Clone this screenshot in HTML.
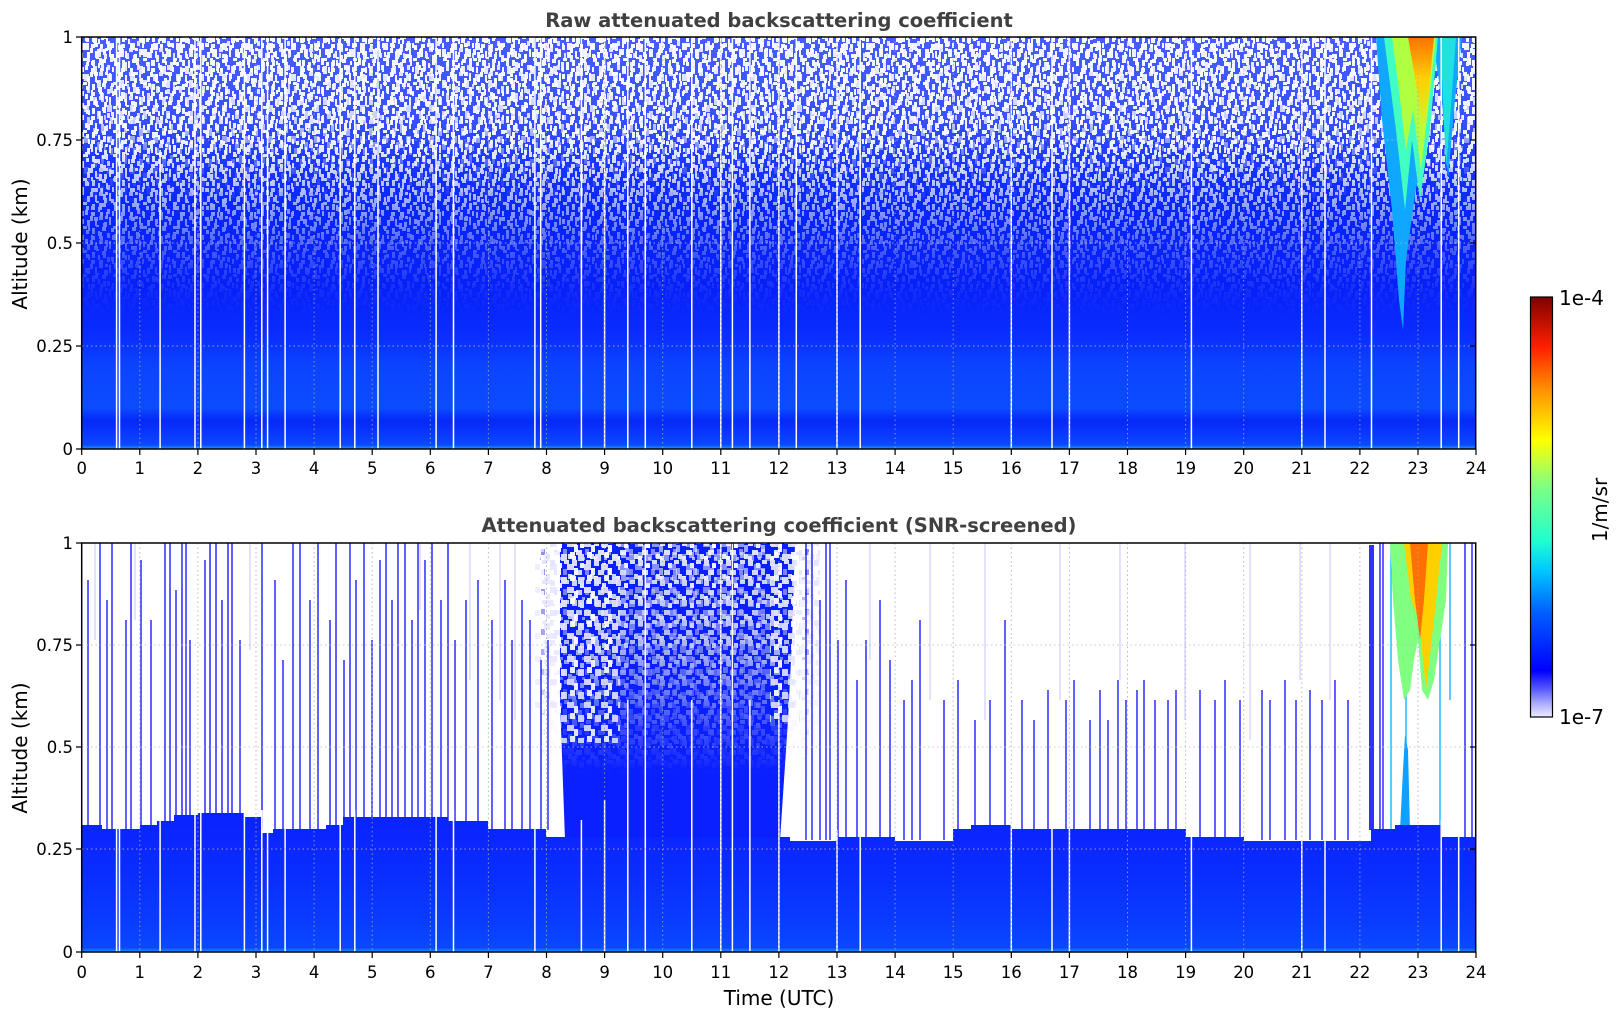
<!DOCTYPE html>
<html><head><meta charset="utf-8">
<style>
html,body{margin:0;padding:0;background:#fff;}
svg{display:block;}
text{font-family:"DejaVu Sans","Liberation Sans",sans-serif;fill:#000;}
</style></head>
<body>
<svg width="1621" height="1020" viewBox="0 0 1621 1020" xmlns="http://www.w3.org/2000/svg">
<defs>
  <linearGradient id="topBase" x1="0" y1="0" x2="0" y2="1">
    <stop offset="0" stop-color="#1030ff"/>
    <stop offset="0.35" stop-color="#0a28ff"/>
    <stop offset="0.6" stop-color="#0620f8"/>
    <stop offset="0.72" stop-color="#0a2cff"/>
    <stop offset="0.8" stop-color="#0c44ff"/>
    <stop offset="0.9" stop-color="#0c4cff"/>
    <stop offset="0.93" stop-color="#0628f8"/>
    <stop offset="0.96" stop-color="#0a36ff"/>
    <stop offset="0.99" stop-color="#0c48ff"/>
    <stop offset="1" stop-color="#10a0ff"/>
  </linearGradient>
  <linearGradient id="topMaskG" x1="0" y1="0" x2="0" y2="1">
    <stop offset="0" stop-color="#fff" stop-opacity="1"/>
    <stop offset="0.25" stop-color="#fff" stop-opacity="0.95"/>
    <stop offset="0.4" stop-color="#fff" stop-opacity="0.6"/>
    <stop offset="0.52" stop-color="#fff" stop-opacity="0.25"/>
    <stop offset="0.62" stop-color="#fff" stop-opacity="0.05"/>
    <stop offset="0.68" stop-color="#fff" stop-opacity="0"/>
  </linearGradient>
  <linearGradient id="topMaskG2" x1="0" y1="0" x2="0" y2="1">
    <stop offset="0" stop-color="#fff" stop-opacity="1"/>
    <stop offset="0.2" stop-color="#fff" stop-opacity="0.8"/>
    <stop offset="0.33" stop-color="#fff" stop-opacity="0.2"/>
    <stop offset="0.42" stop-color="#fff" stop-opacity="0"/>
  </linearGradient>
  <mask id="topMask" maskUnits="userSpaceOnUse" x="82" y="37" width="1394" height="412">
    <rect x="82" y="37" width="1394" height="412" fill="url(#topMaskG)"/>
  </mask>
  <mask id="topMask2" maskUnits="userSpaceOnUse" x="82" y="37" width="1394" height="412">
    <rect x="82" y="37" width="1394" height="412" fill="url(#topMaskG2)"/>
  </mask>
  <pattern id="sp1" width="30" height="24" patternUnits="userSpaceOnUse">
    <rect x="0" y="0" width="3" height="5" fill="#fff"/>
    <rect x="5" y="3" width="2" height="7" fill="#fff"/>
    <rect x="9" y="0" width="4" height="4" fill="#e6e6ff"/>
    <rect x="14" y="6" width="3" height="5" fill="#fff"/>
    <rect x="19" y="1" width="2" height="8" fill="#fff"/>
    <rect x="23" y="10" width="4" height="3" fill="#fff"/>
    <rect x="27" y="4" width="3" height="6" fill="#fff"/>
    <rect x="2" y="12" width="3" height="6" fill="#fff"/>
    <rect x="8" y="15" width="2" height="5" fill="#fff"/>
    <rect x="12" y="11" width="4" height="4" fill="#fff"/>
    <rect x="17" y="17" width="3" height="5" fill="#e6e6ff"/>
    <rect x="22" y="19" width="2" height="5" fill="#fff"/>
    <rect x="26" y="14" width="3" height="4" fill="#fff"/>
    <rect x="1" y="20" width="4" height="4" fill="#fff"/>
    <rect x="10" y="20" width="3" height="4" fill="#fff"/>
    <rect x="15" y="0" width="3" height="3" fill="#fff"/>
    <rect x="6" y="9" width="3" height="2" fill="#fff"/>
  </pattern>
  <pattern id="sp2" width="37" height="29" patternUnits="userSpaceOnUse">
    <rect x="3" y="2" width="2" height="6" fill="#fff"/>
    <rect x="11" y="7" width="3" height="5" fill="#fff"/>
    <rect x="17" y="3" width="2" height="4" fill="#fff"/>
    <rect x="25" y="0" width="3" height="7" fill="#fff"/>
    <rect x="32" y="9" width="2" height="6" fill="#fff"/>
    <rect x="7" y="16" width="3" height="5" fill="#fff"/>
    <rect x="20" y="14" width="4" height="4" fill="#fff"/>
    <rect x="29" y="20" width="3" height="6" fill="#fff"/>
    <rect x="14" y="23" width="2" height="5" fill="#fff"/>
    <rect x="0" y="25" width="3" height="4" fill="#fff"/>
  </pattern>
  <pattern id="sp3" width="23" height="31" patternUnits="userSpaceOnUse">
    <rect x="1" y="4" width="4" height="8" fill="#fff"/>
    <rect x="9" y="0" width="3" height="9" fill="#fff"/>
    <rect x="15" y="12" width="5" height="7" fill="#fff"/>
    <rect x="5" y="18" width="4" height="8" fill="#fff"/>
    <rect x="18" y="24" width="3" height="7" fill="#fff"/>
    <rect x="12" y="22" width="2" height="5" fill="#eaeaff"/>
  </pattern>
  <pattern id="lav" width="22" height="20" patternUnits="userSpaceOnUse">
    <rect x="0" y="0" width="5" height="6" fill="#e4e4ff"/>
    <rect x="8" y="3" width="4" height="5" fill="#fff"/>
    <rect x="14" y="0" width="5" height="4" fill="#e4e4ff"/>
    <rect x="4" y="10" width="6" height="5" fill="#e4e4ff"/>
    <rect x="13" y="9" width="4" height="6" fill="#8a8aff"/>
    <rect x="18" y="14" width="4" height="5" fill="#e4e4ff"/>
    <rect x="0" y="16" width="4" height="4" fill="#fff"/>
    <rect x="10" y="17" width="3" height="3" fill="#b0b0ff"/>
  </pattern>
  <pattern id="lav2" width="17" height="23" patternUnits="userSpaceOnUse">
    <rect x="0" y="2" width="6" height="7" fill="#e4e4ff"/>
    <rect x="9" y="0" width="5" height="6" fill="#fff"/>
    <rect x="6" y="12" width="7" height="6" fill="#e4e4ff"/>
    <rect x="13" y="16" width="4" height="7" fill="#fff"/>
  </pattern>
  <linearGradient id="blobMaskG" x1="0" y1="0" x2="0" y2="1">
    <stop offset="0" stop-color="#fff" stop-opacity="1"/>
    <stop offset="0.35" stop-color="#fff" stop-opacity="0.75"/>
    <stop offset="0.6" stop-color="#fff" stop-opacity="0.3"/>
    <stop offset="0.8" stop-color="#fff" stop-opacity="0"/>
  </linearGradient>
  <mask id="blobMask" maskUnits="userSpaceOnUse" x="540" y="543" width="280" height="290">
    <rect x="540" y="543" width="280" height="290" fill="url(#blobMaskG)"/>
  </mask>
  <linearGradient id="botBase" x1="0" y1="0" x2="0" y2="1">
    <stop offset="0" stop-color="#0a22ff"/>
    <stop offset="0.4" stop-color="#0a2cff"/>
    <stop offset="0.7" stop-color="#0a38ff"/>
    <stop offset="0.85" stop-color="#0a40ff"/>
    <stop offset="0.97" stop-color="#0a48ff"/>
    <stop offset="1" stop-color="#10a0ff"/>
  </linearGradient>
  <linearGradient id="cbar" x1="0" y1="1" x2="0" y2="0">
    <stop offset="0" stop-color="#ececff"/>
    <stop offset="0.03" stop-color="#b0b0ff"/>
    <stop offset="0.07" stop-color="#5050ff"/>
    <stop offset="0.11" stop-color="#0000ff"/>
    <stop offset="0.25" stop-color="#0060ff"/>
    <stop offset="0.35" stop-color="#00c8ff"/>
    <stop offset="0.42" stop-color="#20ffd0"/>
    <stop offset="0.55" stop-color="#80ff80"/>
    <stop offset="0.66" stop-color="#ffff00"/>
    <stop offset="0.78" stop-color="#ff9000"/>
    <stop offset="0.88" stop-color="#ff2000"/>
    <stop offset="1" stop-color="#800000"/>
  </linearGradient>
  <linearGradient id="plumeG" x1="0" y1="0" x2="0" y2="1">
    <stop offset="0" stop-color="#ff7000"/>
    <stop offset="0.4" stop-color="#ffd000"/>
    <stop offset="1" stop-color="#c0ff40"/>
  </linearGradient>
  <clipPath id="c1"><rect x="82" y="37" width="1394" height="412"/></clipPath>
  <clipPath id="c2"><rect x="82" y="543" width="1394" height="409"/></clipPath>
</defs>

<text x="779" y="27" text-anchor="middle" font-size="19.5" font-weight="bold" style="fill:#404040">Raw attenuated backscattering coefficient</text>
<text x="779" y="532" text-anchor="middle" font-size="19.5" font-weight="bold" style="fill:#404040">Attenuated backscattering coefficient (SNR-screened)</text>

<!-- ===== TOP PLOT ===== -->
<g clip-path="url(#c1)">
  <rect x="82" y="37" width="1394" height="412" fill="url(#topBase)"/>
  <g mask="url(#topMask)">
    <rect x="82" y="37" width="1394" height="412" fill="url(#sp1)"/>
    <rect x="82" y="37" width="1394" height="412" fill="url(#sp2)"/>
  </g>
  <g mask="url(#topMask2)">
    <rect x="82" y="37" width="1394" height="412" fill="url(#sp3)"/>
    <rect x="82" y="37" width="1394" height="412" fill="#e8e8ff" opacity="0.25"/>
  </g>
  <!-- plume -->
  <path d="M1376 37 L1462 37 L1455 100 L1448 180 L1442 100 L1432 37 L1425 140 L1415 195 L1406 260 L1403 330 L1399 300 L1392 210 L1382 120 Z" fill="#10a8ff"/>
  <path d="M1440 37 L1456 37 L1450 120 L1446 170 L1443 100 Z" fill="#20e0e0"/>
  <path d="M1384 37 L1438 37 L1430 130 L1420 200 L1412 140 L1405 210 L1396 130 Z" fill="#40ffc0"/>
  <path d="M1392 37 L1436 37 L1428 110 L1421 170 L1413 110 L1406 150 L1399 90 Z" fill="#b0ff40"/>
  <path d="M1408 37 L1434 37 L1429 90 L1423 140 L1417 90 Z" fill="url(#plumeG)"/>
  <g stroke="#fff" stroke-width="1.5">
    <line x1="116.6" y1="37" x2="116.6" y2="449"/><line x1="119.5" y1="37" x2="119.5" y2="449"/>
    <line x1="160.1" y1="150" x2="160.1" y2="449"/><line x1="195" y1="37" x2="195" y2="449"/>
    <line x1="200.8" y1="37" x2="200.8" y2="449"/><line x1="244.4" y1="37" x2="244.4" y2="449"/>
    <line x1="261.8" y1="37" x2="261.8" y2="449"/><line x1="267.6" y1="37" x2="267.6" y2="449"/>
    <line x1="285.1" y1="37" x2="285.1" y2="449"/><line x1="340.2" y1="37" x2="340.2" y2="449"/>
    <line x1="354.8" y1="37" x2="354.8" y2="449"/><line x1="378" y1="37" x2="378" y2="449"/>
    <line x1="436.1" y1="37" x2="436.1" y2="449"/><line x1="453.5" y1="37" x2="453.5" y2="449"/>
    <line x1="534.9" y1="37" x2="534.9" y2="449"/><line x1="540.7" y1="37" x2="540.7" y2="449"/>
    <line x1="581.4" y1="37" x2="581.4" y2="449"/><line x1="604.6" y1="37" x2="604.6" y2="449"/>
    <line x1="627.8" y1="37" x2="627.8" y2="449"/><line x1="645.3" y1="37" x2="645.3" y2="449"/>
    <line x1="691.8" y1="37" x2="691.8" y2="449"/><line x1="720.8" y1="37" x2="720.8" y2="449"/>
    <line x1="732.4" y1="37" x2="732.4" y2="449"/><line x1="749.9" y1="37" x2="749.9" y2="449"/>
    <line x1="778.9" y1="37" x2="778.9" y2="449"/><line x1="796.3" y1="37" x2="796.3" y2="449"/>
    <line x1="837" y1="37" x2="837" y2="449"/><line x1="860.2" y1="37" x2="860.2" y2="449"/>
    <line x1="1011.3" y1="37" x2="1011.3" y2="449"/><line x1="1052" y1="37" x2="1052" y2="449"/>
    <line x1="1069.4" y1="37" x2="1069.4" y2="449"/><line x1="1191.4" y1="37" x2="1191.4" y2="449"/>
    <line x1="1301.8" y1="37" x2="1301.8" y2="449"/><line x1="1325" y1="37" x2="1325" y2="449"/>
    <line x1="1371.5" y1="37" x2="1371.5" y2="449"/><line x1="1441.2" y1="37" x2="1441.2" y2="449"/>
    <line x1="1458.7" y1="37" x2="1458.7" y2="449"/>
  </g>
  <g stroke="#bbb" stroke-width="1" stroke-dasharray="1.5,3" opacity="0.8">
    <line x1="82" y1="140" x2="1476" y2="140"/><line x1="82" y1="243" x2="1476" y2="243"/><line x1="82" y1="346" x2="1476" y2="346"/>
  </g>
</g>

<!-- ===== BOTTOM PLOT ===== -->
<g clip-path="url(#c2)">
  <rect x="82" y="543" width="1394" height="409" fill="#fff"/>
  <!-- faint lavender lines in top region -->
  <g stroke="#e2e2ff" stroke-width="2">
    <line x1="95" y1="543" x2="95" y2="640"/><line x1="135" y1="543" x2="135" y2="620"/>
    <line x1="250" y1="543" x2="250" y2="650"/><line x1="420" y1="543" x2="420" y2="610"/>
    <line x1="470" y1="543" x2="470" y2="680"/><line x1="500" y1="543" x2="500" y2="700"/>
    <line x1="515" y1="543" x2="515" y2="720"/><line x1="870" y1="543" x2="870" y2="660"/>
    <line x1="930" y1="543" x2="930" y2="700"/><line x1="985" y1="543" x2="985" y2="720"/>
    <line x1="1060" y1="543" x2="1060" y2="700"/><line x1="1120" y1="543" x2="1120" y2="680"/>
    <line x1="1185" y1="543" x2="1185" y2="720"/><line x1="1250" y1="543" x2="1250" y2="740"/>
    <line x1="1330" y1="543" x2="1330" y2="700"/><line x1="1300" y1="543" x2="1300" y2="680"/>
  </g>
  <!-- blob -->
  <path d="M560 543 L795 543 L792 640 L788 720 L780 840 L565 840 L560 700 Z" fill="#0a20ff"/>
  <g mask="url(#blobMask)">
    <rect x="540" y="543" width="280" height="290" fill="url(#lav)"/>
    <rect x="540" y="543" width="280" height="290" fill="url(#lav2)" opacity="0.6"/>
  </g>
  <rect x="560" y="543" width="60" height="200" fill="url(#lav2)" opacity="0.85"/>
  <rect x="770" y="543" width="30" height="180" fill="url(#lav2)" opacity="0.85"/>
  <rect x="535" y="560" width="30" height="150" fill="url(#lav2)" opacity="0.6"/>
  <!-- blue vertical lines -->
  <g stroke="#0a0aff" stroke-width="1.3">
    <line x1="88" y1="580" x2="88" y2="830"/><line x1="100" y1="543" x2="100" y2="830"/>
    <line x1="107" y1="600" x2="107" y2="830"/><line x1="112" y1="543" x2="112" y2="830"/>
    <line x1="126" y1="620" x2="126" y2="830"/><line x1="131" y1="543" x2="131" y2="830"/>
    <line x1="141" y1="560" x2="141" y2="830"/><line x1="151" y1="620" x2="151" y2="830"/>
    <line x1="165" y1="543" x2="165" y2="830"/><line x1="170" y1="543" x2="170" y2="830"/>
    <line x1="176" y1="590" x2="176" y2="830"/><line x1="182" y1="543" x2="182" y2="830"/>
    <line x1="186" y1="543" x2="186" y2="830"/><line x1="190" y1="640" x2="190" y2="830"/>
    <line x1="205" y1="560" x2="205" y2="830"/><line x1="210" y1="543" x2="210" y2="830"/>
    <line x1="216" y1="543" x2="216" y2="830"/><line x1="222" y1="600" x2="222" y2="830"/>
    <line x1="228" y1="543" x2="228" y2="830"/><line x1="232" y1="543" x2="232" y2="830"/>
    <line x1="240" y1="640" x2="240" y2="830"/><line x1="262" y1="543" x2="262" y2="830"/>
    <line x1="275" y1="580" x2="275" y2="830"/><line x1="283" y1="660" x2="283" y2="830"/>
    <line x1="293" y1="543" x2="293" y2="830"/><line x1="300" y1="543" x2="300" y2="830"/>
    <line x1="310" y1="600" x2="310" y2="830"/><line x1="318" y1="543" x2="318" y2="830"/>
    <line x1="330" y1="620" x2="330" y2="830"/><line x1="336" y1="543" x2="336" y2="830"/>
    <line x1="344" y1="660" x2="344" y2="830"/><line x1="350" y1="543" x2="350" y2="830"/>
    <line x1="356" y1="580" x2="356" y2="830"/><line x1="364" y1="543" x2="364" y2="830"/>
    <line x1="372" y1="640" x2="372" y2="830"/><line x1="380" y1="560" x2="380" y2="830"/>
    <line x1="386" y1="543" x2="386" y2="830"/><line x1="392" y1="600" x2="392" y2="830"/>
    <line x1="398" y1="543" x2="398" y2="830"/><line x1="405" y1="543" x2="405" y2="830"/>
    <line x1="412" y1="620" x2="412" y2="830"/><line x1="418" y1="543" x2="418" y2="830"/>
    <line x1="425" y1="560" x2="425" y2="830"/><line x1="432" y1="543" x2="432" y2="830"/>
    <line x1="441" y1="600" x2="441" y2="830"/><line x1="448" y1="543" x2="448" y2="830"/>
    <line x1="455" y1="640" x2="455" y2="830"/><line x1="466" y1="600" x2="466" y2="830"/>
    <line x1="478" y1="580" x2="478" y2="830"/><line x1="492" y1="620" x2="492" y2="830"/>
    <line x1="505" y1="580" x2="505" y2="830"/><line x1="512" y1="640" x2="512" y2="830"/>
    <line x1="522" y1="600" x2="522" y2="830"/><line x1="530" y1="620" x2="530" y2="830"/>
    <line x1="541" y1="660" x2="541" y2="830"/><line x1="548" y1="640" x2="548" y2="830"/>
    <line x1="806" y1="543" x2="806" y2="840"/><line x1="812" y1="543" x2="812" y2="840"/>
    <line x1="820" y1="600" x2="820" y2="840"/><line x1="826" y1="543" x2="826" y2="840"/>
    <line x1="830" y1="543" x2="830" y2="840"/><line x1="838" y1="640" x2="838" y2="840"/>
    <line x1="846" y1="580" x2="846" y2="840"/><line x1="857" y1="680" x2="857" y2="840"/>
    <line x1="866" y1="640" x2="866" y2="840"/><line x1="880" y1="600" x2="880" y2="840"/>
    <line x1="890" y1="660" x2="890" y2="840"/><line x1="904" y1="700" x2="904" y2="840"/>
    <line x1="912" y1="680" x2="912" y2="840"/><line x1="920" y1="620" x2="920" y2="840"/>
    <line x1="944" y1="700" x2="944" y2="840"/><line x1="958" y1="680" x2="958" y2="840"/>
    <line x1="975" y1="720" x2="975" y2="840"/><line x1="990" y1="700" x2="990" y2="840"/>
    <line x1="1005" y1="620" x2="1005" y2="840"/><line x1="1022" y1="700" x2="1022" y2="840"/>
    <line x1="1034" y1="720" x2="1034" y2="840"/><line x1="1048" y1="690" x2="1048" y2="840"/>
    <line x1="1066" y1="700" x2="1066" y2="840"/><line x1="1074" y1="680" x2="1074" y2="840"/>
    <line x1="1090" y1="720" x2="1090" y2="840"/><line x1="1100" y1="690" x2="1100" y2="840"/>
    <line x1="1108" y1="720" x2="1108" y2="840"/><line x1="1118" y1="680" x2="1118" y2="840"/>
    <line x1="1126" y1="700" x2="1126" y2="840"/><line x1="1137" y1="690" x2="1137" y2="840"/>
    <line x1="1144" y1="680" x2="1144" y2="840"/><line x1="1155" y1="700" x2="1155" y2="840"/>
    <line x1="1168" y1="700" x2="1168" y2="840"/><line x1="1176" y1="690" x2="1176" y2="840"/>
    <line x1="1200" y1="690" x2="1200" y2="840"/><line x1="1215" y1="700" x2="1215" y2="840"/>
    <line x1="1225" y1="680" x2="1225" y2="840"/><line x1="1240" y1="700" x2="1240" y2="840"/>
    <line x1="1262" y1="690" x2="1262" y2="840"/><line x1="1270" y1="700" x2="1270" y2="840"/>
    <line x1="1285" y1="680" x2="1285" y2="840"/><line x1="1296" y1="700" x2="1296" y2="840"/>
    <line x1="1310" y1="690" x2="1310" y2="840"/><line x1="1322" y1="700" x2="1322" y2="840"/>
    <line x1="1335" y1="680" x2="1335" y2="840"/><line x1="1348" y1="700" x2="1348" y2="840"/>
    <line x1="1380" y1="543" x2="1380" y2="840"/><line x1="1383" y1="543" x2="1383" y2="840"/>
    <line x1="1465" y1="543" x2="1465" y2="840"/><line x1="1472" y1="543" x2="1472" y2="840"/>
  </g>
  <rect x="1369" y="545" width="5" height="285" fill="#3030ff"/>
  <g stroke="#00b0ff" stroke-width="1.3">
    <line x1="1391" y1="543" x2="1391" y2="830"/><line x1="1406" y1="543" x2="1406" y2="830"/>
    <line x1="1440" y1="543" x2="1440" y2="830"/><line x1="1450" y1="543" x2="1450" y2="700"/>
  </g>
  <path d="M1390 543 L1448 543 L1446 600 L1440 640 L1434 680 L1428 700 L1422 690 L1418 640 L1414 660 L1410 690 L1404 700 L1398 660 L1393 600 Z" fill="#80ff80"/>
  <path d="M1404 543 L1442 543 L1434 620 L1426 690 L1419 620 L1411 600 Z" fill="#ffd000"/>
  <path d="M1410 543 L1428 543 L1424 600 L1420 640 L1415 600 Z" fill="#ff7000"/>
  <path d="M1400 830 L1403 770 L1405 735 L1408 750 L1410 830 Z" fill="#10a0ff"/>
  <!-- lower blue region -->
  <path d="M82 952 L82 825 L102 825 L102 829 L140 829 L140 825 L157 825 L157 821 L174 821 L174 815 L198 815 L198 813 L244 813 L244 817 L262 817 L262 833 L273 833 L273 829 L326 829 L326 825 L343 825 L343 817 L448 817 L448 821 L488 821 L488 829 L546 829 L546 837 L790 837 L790 841 L837 841 L837 837 L895 837 L895 841 L953 841 L953 829 L971 829 L971 825 L1011 825 L1011 829 L1186 829 L1186 837 L1244 837 L1244 841 L1371 841 L1371 829 L1395 829 L1395 825 L1442 825 L1442 837 L1476 837 L1476 952 Z" fill="url(#botBase)"/>
  <g stroke="#fff" stroke-width="1.5">
    <line x1="116.6" y1="820" x2="116.6" y2="952"/><line x1="119.5" y1="820" x2="119.5" y2="952"/>
    <line x1="160.1" y1="820" x2="160.1" y2="952"/><line x1="195" y1="810" x2="195" y2="952"/>
    <line x1="200.8" y1="810" x2="200.8" y2="952"/><line x1="244.4" y1="810" x2="244.4" y2="952"/>
    <line x1="261.8" y1="810" x2="261.8" y2="952"/><line x1="267.6" y1="830" x2="267.6" y2="952"/>
    <line x1="285.1" y1="820" x2="285.1" y2="952"/><line x1="340.2" y1="820" x2="340.2" y2="952"/>
    <line x1="354.8" y1="810" x2="354.8" y2="952"/><line x1="436.1" y1="810" x2="436.1" y2="952"/>
    <line x1="453.5" y1="810" x2="453.5" y2="952"/><line x1="534.9" y1="820" x2="534.9" y2="952"/>
    <line x1="581.4" y1="820" x2="581.4" y2="952"/><line x1="604.6" y1="800" x2="604.6" y2="952"/>
    <line x1="627.8" y1="700" x2="627.8" y2="952"/><line x1="645.3" y1="543" x2="645.3" y2="952"/>
    <line x1="691.8" y1="700" x2="691.8" y2="952"/><line x1="720.8" y1="543" x2="720.8" y2="952"/>
    <line x1="732.4" y1="543" x2="732.4" y2="952"/><line x1="749.9" y1="700" x2="749.9" y2="952"/>
    <line x1="778.9" y1="700" x2="778.9" y2="952"/><line x1="837" y1="830" x2="837" y2="952"/>
    <line x1="860.2" y1="830" x2="860.2" y2="952"/><line x1="1011.3" y1="820" x2="1011.3" y2="952"/>
    <line x1="1052" y1="820" x2="1052" y2="952"/><line x1="1069.4" y1="820" x2="1069.4" y2="952"/>
    <line x1="1191.4" y1="820" x2="1191.4" y2="952"/><line x1="1301.8" y1="830" x2="1301.8" y2="952"/>
    <line x1="1325" y1="830" x2="1325" y2="952"/><line x1="1441.2" y1="820" x2="1441.2" y2="952"/>
    <line x1="1458.7" y1="820" x2="1458.7" y2="952"/>
  </g>
  <g stroke="#bbb" stroke-width="1" stroke-dasharray="1.5,3" opacity="0.8">
    <line x1="82" y1="645" x2="1476" y2="645"/><line x1="82" y1="747" x2="1476" y2="747"/><line x1="82" y1="849" x2="1476" y2="849"/>
  </g>
</g>

<g stroke="#aaa" stroke-width="1" stroke-dasharray="1.5,3" opacity="0.8">
  <line x1="139.8" y1="37" x2="139.8" y2="449"/><line x1="197.9" y1="37" x2="197.9" y2="449"/><line x1="256" y1="37" x2="256" y2="449"/><line x1="314.1" y1="37" x2="314.1" y2="449"/><line x1="372.2" y1="37" x2="372.2" y2="449"/><line x1="430.3" y1="37" x2="430.3" y2="449"/><line x1="488.4" y1="37" x2="488.4" y2="449"/><line x1="546.5" y1="37" x2="546.5" y2="449"/><line x1="604.6" y1="37" x2="604.6" y2="449"/><line x1="662.7" y1="37" x2="662.7" y2="449"/><line x1="720.8" y1="37" x2="720.8" y2="449"/><line x1="778.9" y1="37" x2="778.9" y2="449"/><line x1="837" y1="37" x2="837" y2="449"/><line x1="895.1" y1="37" x2="895.1" y2="449"/><line x1="953.2" y1="37" x2="953.2" y2="449"/><line x1="1011.3" y1="37" x2="1011.3" y2="449"/><line x1="1069.4" y1="37" x2="1069.4" y2="449"/><line x1="1127.5" y1="37" x2="1127.5" y2="449"/><line x1="1185.6" y1="37" x2="1185.6" y2="449"/><line x1="1243.7" y1="37" x2="1243.7" y2="449"/><line x1="1301.8" y1="37" x2="1301.8" y2="449"/><line x1="1359.9" y1="37" x2="1359.9" y2="449"/><line x1="1418" y1="37" x2="1418" y2="449"/>
  <line x1="139.8" y1="543" x2="139.8" y2="952"/><line x1="197.9" y1="543" x2="197.9" y2="952"/><line x1="256" y1="543" x2="256" y2="952"/><line x1="314.1" y1="543" x2="314.1" y2="952"/><line x1="372.2" y1="543" x2="372.2" y2="952"/><line x1="430.3" y1="543" x2="430.3" y2="952"/><line x1="488.4" y1="543" x2="488.4" y2="952"/><line x1="546.5" y1="543" x2="546.5" y2="952"/><line x1="604.6" y1="543" x2="604.6" y2="952"/><line x1="662.7" y1="543" x2="662.7" y2="952"/><line x1="720.8" y1="543" x2="720.8" y2="952"/><line x1="778.9" y1="543" x2="778.9" y2="952"/><line x1="837" y1="543" x2="837" y2="952"/><line x1="895.1" y1="543" x2="895.1" y2="952"/><line x1="953.2" y1="543" x2="953.2" y2="952"/><line x1="1011.3" y1="543" x2="1011.3" y2="952"/><line x1="1069.4" y1="543" x2="1069.4" y2="952"/><line x1="1127.5" y1="543" x2="1127.5" y2="952"/><line x1="1185.6" y1="543" x2="1185.6" y2="952"/><line x1="1243.7" y1="543" x2="1243.7" y2="952"/><line x1="1301.8" y1="543" x2="1301.8" y2="952"/><line x1="1359.9" y1="543" x2="1359.9" y2="952"/><line x1="1418" y1="543" x2="1418" y2="952"/>
</g>

<rect x="81.7" y="37" width="1394" height="412" fill="none" stroke="#000" stroke-width="1.5"/>
<rect x="81.7" y="543" width="1394" height="409" fill="none" stroke="#000" stroke-width="1.5"/>

<g stroke="#000" stroke-width="1.2">
  <path d="M81.7 449v6M139.8 449v6M197.9 449v6M256 449v6M314.1 449v6M372.2 449v6M430.3 449v6M488.4 449v6M546.5 449v6M604.6 449v6M662.7 449v6M720.8 449v6M778.9 449v6M837 449v6M895.1 449v6M953.2 449v6M1011.3 449v6M1069.4 449v6M1127.5 449v6M1185.6 449v6M1243.7 449v6M1301.8 449v6M1359.9 449v6M1418 449v6M1476 449v6"/>
  <path d="M81.7 952v6M139.8 952v6M197.9 952v6M256 952v6M314.1 952v6M372.2 952v6M430.3 952v6M488.4 952v6M546.5 952v6M604.6 952v6M662.7 952v6M720.8 952v6M778.9 952v6M837 952v6M895.1 952v6M953.2 952v6M1011.3 952v6M1069.4 952v6M1127.5 952v6M1185.6 952v6M1243.7 952v6M1301.8 952v6M1359.9 952v6M1418 952v6M1476 952v6"/>
  <path d="M76 37h6M76 140h6M76 243h6M76 346h6M76 449h6M1470 140h6M1470 243h6M1470 346h6"/>
  <path d="M76 543h6M76 645h6M76 747h6M76 849h6M76 952h6M1470 645h6M1470 747h6M1470 849h6"/>
</g>

<g font-size="16.5" text-anchor="middle">
  <text x="81.7" y="474">0</text><text x="139.8" y="474">1</text><text x="197.9" y="474">2</text><text x="256" y="474">3</text><text x="314.1" y="474">4</text><text x="372.2" y="474">5</text><text x="430.3" y="474">6</text><text x="488.4" y="474">7</text><text x="546.5" y="474">8</text><text x="604.6" y="474">9</text><text x="662.7" y="474">10</text><text x="720.8" y="474">11</text><text x="778.9" y="474">12</text><text x="837" y="474">13</text><text x="895.1" y="474">14</text><text x="953.2" y="474">15</text><text x="1011.3" y="474">16</text><text x="1069.4" y="474">17</text><text x="1127.5" y="474">18</text><text x="1185.6" y="474">19</text><text x="1243.7" y="474">20</text><text x="1301.8" y="474">21</text><text x="1359.9" y="474">22</text><text x="1418" y="474">23</text><text x="1476" y="474">24</text>
  <text x="81.7" y="978">0</text><text x="139.8" y="978">1</text><text x="197.9" y="978">2</text><text x="256" y="978">3</text><text x="314.1" y="978">4</text><text x="372.2" y="978">5</text><text x="430.3" y="978">6</text><text x="488.4" y="978">7</text><text x="546.5" y="978">8</text><text x="604.6" y="978">9</text><text x="662.7" y="978">10</text><text x="720.8" y="978">11</text><text x="778.9" y="978">12</text><text x="837" y="978">13</text><text x="895.1" y="978">14</text><text x="953.2" y="978">15</text><text x="1011.3" y="978">16</text><text x="1069.4" y="978">17</text><text x="1127.5" y="978">18</text><text x="1185.6" y="978">19</text><text x="1243.7" y="978">20</text><text x="1301.8" y="978">21</text><text x="1359.9" y="978">22</text><text x="1418" y="978">23</text><text x="1476" y="978">24</text>
</g>
<g font-size="16.5" text-anchor="end">
  <text x="73" y="43">1</text><text x="73" y="146">0.75</text><text x="73" y="249">0.5</text><text x="73" y="352">0.25</text><text x="73" y="455">0</text>
  <text x="73" y="549">1</text><text x="73" y="651">0.75</text><text x="73" y="753">0.5</text><text x="73" y="855">0.25</text><text x="73" y="958">0</text>
</g>

<text x="0" y="0" font-size="20" text-anchor="middle" transform="translate(27,244) rotate(-90)">Altitude (km)</text>
<text x="0" y="0" font-size="20" text-anchor="middle" transform="translate(27,748) rotate(-90)">Altitude (km)</text>
<text x="779" y="1005" font-size="20" text-anchor="middle">Time (UTC)</text>

<rect x="1530.5" y="297" width="22" height="420" fill="url(#cbar)" stroke="#000" stroke-width="1.2"/>
<text x="1559" y="305" font-size="20">1e-4</text>
<text x="1559" y="724" font-size="20">1e-7</text>
<text x="0" y="0" font-size="20" text-anchor="middle" transform="translate(1607,510) rotate(-90)">1/m/sr</text>
</svg>
</body></html>
